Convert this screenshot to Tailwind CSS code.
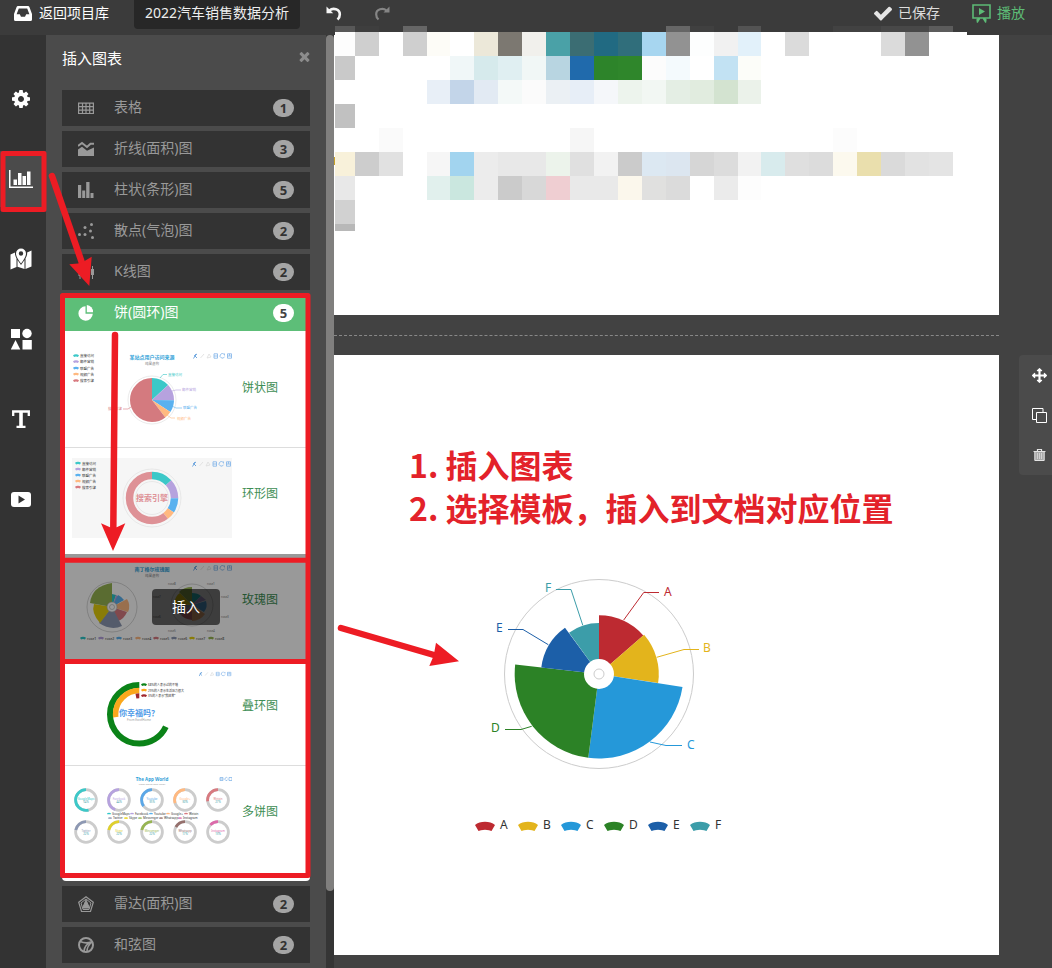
<!DOCTYPE html>
<html lang="zh-CN">
<head>
<meta charset="utf-8">
<meta name="viewport" content="width=device-width, initial-scale=1">
<title>2022汽车销售数据分析</title>
<script src="https://cdn.jsdelivr.net/npm/@tailwindcss/browser@4"></script>
</head>
<body class="bg-[#424242] font-['Noto_Sans','Noto_Sans_CJK_SC',sans-serif] text-sm">
<svg class="hidden" aria-hidden="true">
  <symbol id="toolbox" viewBox="0 0 39 6">
    <g fill="none" stroke="#7fb2e8" stroke-width=".8">
      <path d="M.5 5.500 2 3 3 1M2 3l2 2M1 3l3-2" stroke="#4f93d8"/><path d="M7.500 5l3.500-4" stroke="#ddd"/><path d="M14 5l2-4 2 3-4 1" stroke="#ddd"/>
      <path d="M21 .8h3.500v4.400h-3.500zM21 3h3.500M31 1.200a2.300 2.300 0 1 0 .5 2.500M31.500.5v2M34.500.8h4v4.400h-4zM34.500 3h4M36.500.8v2"/>
    </g>
  </symbol>
  <symbol id="fan" viewBox="-10 -5 20 10"><path d="M-10-1C-5-5.300 5-5.300 10-1L6.500 5 4 4.300Q0 3-4 4.300L-6.500 5Z"/></symbol>
</svg>
<div class="relative flex min-h-screen flex-col overflow-hidden">
  <header class="flex h-[35px] items-start bg-[#3b3b3b] text-white">
    <a href="#" class="flex h-[26px] w-[120px] items-center pl-3.5">
      <svg class="mr-[7px] h-[15px] w-[18px]" viewBox="0 0 18 15" fill="currentColor"><path fill-rule="evenodd" d="M4 0h10q1 0 1.400 1L18 8v5.500q0 1.500-1.500 1.500h-15Q0 15 0 13.500V8L2.600 1Q3 0 4 0zm.8 2.500L2.600 8.200h3.200L7 10.700h4l1.200-2.500h3.200l-2.200-5.700z"/></svg>
      返回项目库
    </a>
    <button class="ml-3.5 h-[29px] rounded-b bg-[#272727] px-[11px] pb-1 text-[#eee]">2022汽车销售数据分析</button>
    <button aria-label="撤销" class="ml-[26px] flex h-[26px] items-center">
      <svg class="h-4 w-4" viewBox="0 0 16 16" fill="none" stroke="#f5f5f5" stroke-width="2.600"><path d="M3.500 5.500C7 2.500 14 4 13.800 9.500q0 3-2.300 5"/><path d="M.5 1.500v6.700H7.200z" fill="#f5f5f5" stroke="none"/></svg>
    </button>
    <button aria-label="重做" class="ml-8 flex h-[26px] items-center">
      <svg class="h-4 w-4" viewBox="0 0 16 16" fill="none" stroke="#858585" stroke-width="2.200"><path d="M12.500 5.500C9 2.500 2 4 2.200 9.500q0 3 2.300 5"/><path d="M15.500 1.500v6H9.500z" fill="#858585" stroke="none"/></svg>
    </button>
    <div class="ml-auto flex h-[26px] items-center text-[#ddd]">
      <svg class="mr-1.5 h-[18px] w-[18px]" viewBox="121 236 1550 1286" fill="#e5e5e5"><path d="M1671 566q0 40-28 68l-724 724-136 136q-28 28-68 28t-68-28l-136-136-362-362q-28-28-28-68t28-68l136-136q28-28 68-28t68 28l294 295 656-657q28-28 68-28t68 28l136 136q28 28 28 68z"/></svg>
      已保存
    </div>
    <button class="mr-[27px] ml-8 flex h-[26px] items-center text-[#5dbb76]">
      <svg class="mr-1.5 h-[19px] w-[19px]" viewBox="0 0 19 19"><path d="M1 1h17v13H1zM7.500 14.500l-2.500 4M11.500 14.500l2.500 4M4.500 16.500l3-2M14.500 16.500l-3-2" fill="none" stroke="currentColor" stroke-width="1.600"/><path d="M7 4l6 3.500L7 11z" fill="currentColor"/></svg>
      播放
    </button>
  </header>

  <div class="flex flex-1">
    <nav class="flex w-[46px] shrink-0 flex-col gap-6 bg-[#333] pt-9 text-white">
      <button aria-label="设置" class="flex h-14 items-center pl-3"><svg class="h-[18px] w-[18px]" viewBox="0 128 1536 1536" fill="currentColor"><path d="M1024 896q0-106-75-181t-181-75-181 75-75 181 75 181 181 75 181-75 75-181zm512-109v222q0 12-8 23t-20 13l-185 28q-19 54-39 91 35 50 107 138 10 12 10 25t-9 23q-27 37-99 108t-94 71q-12 0-26-9l-138-108q-44 23-91 38-16 136-29 186-7 28-36 28h-222q-14 0-24.500-8.500t-11.500-21.500l-28-184q-49-16-90-37l-141 107q-10 9-25 9-14 0-25-11-126-114-165-168-7-10-7-23 0-12 8-23 15-21 51-66.500t54-70.500q-27-50-41-99l-183-27q-13-2-21-12.500t-8-23.500v-222q0-12 8-23t19-13l186-28q14-46 39-92-40-57-107-138-10-12-10-24 0-10 9-23 26-36 98.500-107.500t94.500-71.500q13 0 26 10l138 107q44-23 91-38 16-136 29-186 7-28 36-28h222q14 0 24.500 8.500t11.500 21.500l28 184q49 16 90 37l142-107q9-9 24-9 13 0 25 10 129 119 165 170 7 8 7 22 0 12-8 23-15 21-51 66.500t-54 70.500q26 50 41 98l183 28q13 2 21 12.500t8 23.500z"/></svg></button>
      <button aria-label="图表" class="flex h-14 items-center bg-[#4b4b4b] pl-[9px]"><svg class="h-[18px] w-6" viewBox="0 0 24 18" fill="currentColor"><path d="M0 0h1.500v16.500H24V18H0zM4.500 9.500h3.500V15H4.500zM9 3h3.500v12H9zM13.500 6H17v9h-3.500zM18 1.500h3.500V15H18z"/></svg></button>
      <button aria-label="地图" class="flex h-14 items-center pl-2.5"><svg class="h-[22px] w-[22px]" viewBox="0 0 22 22" fill="currentColor"><path d="M.5 6.500 5 4.500q-.2 3 1.500 6v8.500L.5 21.500zM15.500 10.500q2-3 1.600-6l4.400-2v16l-6 2.500zM7.500 12l3.500 5 3.500-5v9l-7-2.300z"/><path fill-rule="evenodd" d="M11 .5a5 5 0 0 1 5 5q0 3.500-5 10-5-6.500-5-10a5 5 0 0 1 5-5zm0 2.800a2.200 2.200 0 1 0 0 4.400 2.200 2.200 0 0 0 0-4.400z"/></svg></button>
      <button aria-label="形状" class="flex h-14 items-center pl-[11px]"><svg class="h-[22px] w-[21px]" viewBox="0 0 21 22" fill="currentColor"><path d="M0 1h9v9H0zM4.500 12l4.800 9.500H-.3zM11.500 12h9.300v9.500h-9.300z"/><circle cx="16" cy="5.500" r="4.700"/></svg></button>
      <button aria-label="文字" class="flex h-14 items-center pl-3"><svg class="h-[18px] w-[18px]" viewBox="0 0 18 18" fill="none" stroke="currentColor"><path d="M1.200 6V1.500h15.600V6M4.500 16.800h9" stroke-width="2.300"/><path d="M9 1.500v15" stroke-width="3.600"/></svg></button>
      <button aria-label="视频" class="flex h-14 items-center pl-[11px]"><svg class="h-[15px] w-5" viewBox="0 0 20 15"><rect width="20" height="15" rx="3" fill="currentColor"/><path d="M7.500 3.500l6.500 4-6.500 4z" fill="#333"/></svg></button>
    </nav>

    <aside class="w-[280px] shrink-0 bg-[#4b4b4b] px-4">
      <div class="flex h-[55px] items-center justify-between pb-2">
        <h2 class="text-[15px] text-white">插入图表</h2>
        <button aria-label="关闭"><svg class="-mt-1 h-[11px] w-[11px]" viewBox="302 238 1188 1316" fill="#8c8c8c"><path d="M1490 1322q0 40-28 68l-136 136q-28 28-68 28t-68-28l-294-294-294 294q-28 28-68 28t-68-28l-136-136q-28-28-28-68t28-68l294-294-294-294q-28-28-28-68t28-68l136-136q28-28 68-28t68 28l294 294 294-294q28-28 68-28t68 28l136 136q28 28 28 68t-28 68l-294 294 294 294q28 28 28 68z"/></svg></button>
      </div>
      <div class="flex flex-col gap-[5px] text-[#999]">
        <button class="flex h-9 items-center bg-[#333] px-4">
          <svg class="mr-5 h-4 w-4" viewBox="0 0 16 16" fill="none" stroke="currentColor" stroke-width="1.200"><path d="M.6 3.100h14.800v10.400H.6zM0 6.600h16M0 10.100h16M4.500 3v10.500M8 3v10.500M11.700 3v10.500"/></svg>
          <span class="pb-0.5">表格</span><span class="ml-auto h-[18px] w-[21px] rounded-full bg-[#a5a5a5] text-[13px] leading-[18px] font-bold text-[#333]">1</span>
        </button>
        <button class="flex h-9 items-center bg-[#333] px-4">
          <svg class="mr-5 h-4 w-4" viewBox="0 0 16 16" fill="currentColor"><path d="M0 8.500l4-2.700 5 4L16 6.500V15H0z"/><path d="M0 5l4-3 5 4L12.500 2.800H16" fill="none" stroke="currentColor" stroke-width="2"/></svg>
          <span class="pb-0.5">折线(面积)图</span><span class="ml-auto h-[18px] w-[21px] rounded-full bg-[#a5a5a5] text-[13px] leading-[18px] font-bold text-[#333]">3</span>
        </button>
        <button class="flex h-9 items-center bg-[#333] px-4">
          <svg class="mr-5 h-4 w-4" viewBox="0 0 16 16" fill="currentColor"><path d="M0 3h3.200v13H0zM4.200 8.500h3v7.500h-3zM8.200 0h3.300v16H8.200zM12.500 11h3v5h-3z"/></svg>
          <span class="pb-0.5">柱状(条形)图</span><span class="ml-auto h-[18px] w-[21px] rounded-full bg-[#a5a5a5] text-[13px] leading-[18px] font-bold text-[#333]">5</span>
        </button>
        <button class="flex h-9 items-center bg-[#333] px-4">
          <svg class="mr-5 h-4 w-4" viewBox="0 0 16 16" fill="currentColor"><circle cx="1.500" cy="11.500" r="1.500"/><circle cx="7" cy="4.500" r="1.500"/><circle cx="7" cy="11.500" r="1.500"/><circle cx="13.500" cy="1.500" r="1.500"/><circle cx="12.500" cy="8" r="1.500"/><circle cx="14.500" cy="14.500" r="1.500"/></svg>
          <span class="pb-0.5">散点(气泡)图</span><span class="ml-auto h-[18px] w-[21px] rounded-full bg-[#a5a5a5] text-[13px] leading-[18px] font-bold text-[#333]">2</span>
        </button>
        <button class="flex h-9 items-center bg-[#333] px-4">
          <svg class="mr-5 h-4 w-4" viewBox="0 0 16 16" fill="currentColor"><path d="M.5 6h3v6h-3zM1.500 4h1v11h-1zM6.500 3h3v8h-3zM7.500 1h1v13h-1zM13 5h3v6h-3zM14 2h1v13h-1z"/></svg>
          <span class="pb-0.5">K线图</span><span class="ml-auto h-[18px] w-[21px] rounded-full bg-[#a5a5a5] text-[13px] leading-[18px] font-bold text-[#333]">2</span>
        </button>
        <section>
          <button class="flex h-9 w-full items-center bg-[#5dbe78] px-4 text-white">
            <svg class="mr-5 h-4 w-4" viewBox="0 0 16 16" fill="currentColor"><path d="M7.500 1.300v7.500h7.300A7.200 7.200 0 1 1 7.500 1.300z"/><path d="M8.800 0a6.800 6.800 0 0 1 6.200 7.200H8.800z"/></svg>
            <span class="pb-0.5">饼(圆环)图</span><span class="ml-auto h-[18px] w-[21px] rounded-full bg-white text-[13px] leading-[18px] font-bold text-[#444]">5</span>
          </button>
          <ul class="rounded-b bg-white pt-[11px] pb-[9px] text-xs text-[#3e8e54]">
            <li class="flex h-[106px] items-start border-b border-[#ddd] px-2.5 pt-2.5">
              <svg class="h-20 w-40" viewBox="72 352 160 80">
                <use href="#toolbox" x="193" y="353" width="39" height="6"/>
                <g fill="#3cc8c8"><use href="#fan" x="73" y="353.500" width="6" height="4"/></g><g fill="#b6a2de"><use href="#fan" x="73" y="359.500" width="6" height="4"/></g><g fill="#5ab1ef"><use href="#fan" x="73" y="366" width="6" height="4"/></g><g fill="#ffb980"><use href="#fan" x="73" y="372" width="6" height="4"/></g><g fill="#d87a80"><use href="#fan" x="73" y="378.500" width="6" height="4"/></g>
                <g font-size="3.500" fill="#333"><text x="80" y="357">直接访问</text><text x="80" y="363">邮件营销</text><text x="80" y="369.500">联盟广告</text><text x="80" y="375.500">视频广告</text><text x="80" y="382">搜索引擎</text></g>
                <text x="152" y="359" font-size="5" text-anchor="middle" fill="#2f9fd8" font-weight="bold">某站点用户访问来源</text><text x="152" y="365" font-size="3.500" text-anchor="middle" fill="#888">纯属虚构</text>
                <g fill="none" transform="translate(152 400) rotate(-90)"><circle r="24" stroke="#ddd" stroke-width=".6"/>
                  <g stroke-width="22"><circle r="11" pathLength="100" stroke="#3cc8c8" stroke-dasharray="13.100 100"/><circle r="11" pathLength="100" stroke="#b6a2de" stroke-dasharray="12.100 100" stroke-dashoffset="-13.100"/><circle r="11" pathLength="100" stroke="#5ab1ef" stroke-dasharray="9.100 100" stroke-dashoffset="-25.200"/><circle r="11" pathLength="100" stroke="#ffb980" stroke-dasharray="5.300 100" stroke-dashoffset="-34.300"/><circle r="11" pathLength="100" stroke="#d47a7f" stroke-dasharray="60.400 100" stroke-dashoffset="-39.600"/></g></g>
                <g font-size="3.500"><text x="168" y="376" fill="#3cc8c8">直接访问</text><text x="182" y="391" fill="#b6a2de">邮件营销</text><text x="183" y="409" fill="#5ab1ef">联盟广告</text><text x="177" y="420" fill="#ffb980">视频广告</text><text x="108" y="410" fill="#d87a80">搜索引擎</text></g>
                <g fill="none" stroke-width=".6"><path d="M160 378l3-3.500h4" stroke="#3cc8c8"/><path d="M172 391l4-1h5" stroke="#b6a2de"/><path d="M172 406l4 2h6" stroke="#5ab1ef"/><path d="M167 415l4 3h4" stroke="#ffb980"/><path d="M131 407l-3 2h-5" stroke="#d87a80"/></g>
              </svg><span class="ml-2.5 pt-7">饼状图</span>
            </li>
            <li class="flex h-[106px] items-start px-2.5 pt-2.5">
              <svg class="h-20 w-40 bg-[#f6f6f6]" viewBox="72 458 160 80">
                <use href="#toolbox" x="192" y="461" width="39" height="6"/>
                <g fill="#3cc8c8"><use href="#fan" x="75" y="461" width="6" height="4"/></g><g fill="#b6a2de"><use href="#fan" x="75" y="467" width="6" height="4"/></g><g fill="#5ab1ef"><use href="#fan" x="75" y="473" width="6" height="4"/></g><g fill="#ffb980"><use href="#fan" x="75" y="479" width="6" height="4"/></g><g fill="#d87a80"><use href="#fan" x="75" y="485" width="6" height="4"/></g>
                <g font-size="3.500" fill="#333"><text x="82" y="464.500">直接访问</text><text x="82" y="470.500">邮件营销</text><text x="82" y="476.500">联盟广告</text><text x="82" y="482.500">视频广告</text><text x="82" y="488.500">搜索引擎</text></g>
                <g fill="none" transform="translate(152 498) rotate(-90)"><circle r="29" stroke="#ddd" stroke-width=".6"/><circle r="16.500" stroke="#ddd" stroke-width=".6"/>
                  <g stroke-width="7.500"><circle r="22.500" pathLength="100" stroke="#3cc8c8" stroke-dasharray="13.100 100"/><circle r="22.500" pathLength="100" stroke="#b6a2de" stroke-dasharray="12.100 100" stroke-dashoffset="-13.100"/><circle r="22.500" pathLength="100" stroke="#5ab1ef" stroke-dasharray="9.100 100" stroke-dashoffset="-25.200"/><circle r="22.500" pathLength="100" stroke="#ffb980" stroke-dasharray="5.300 100" stroke-dashoffset="-34.300"/><circle r="22.500" pathLength="100" stroke="#de9196" stroke-dasharray="60.400 100" stroke-dashoffset="-39.600"/></g></g>
                <text x="152" y="501" font-size="8" font-weight="bold" text-anchor="middle" fill="#de9196">搜索引擎</text>
              </svg><span class="ml-2.5 pt-7">环形图</span>
            </li>
            <li class="relative flex h-[106px] items-start px-2.5 pt-2.5">
              <svg class="h-20 w-40" viewBox="72 564 160 80">
                <use href="#toolbox" x="193" y="565" width="39" height="6"/>
                <text x="152" y="571" font-size="5" text-anchor="middle" fill="#2f9fd8" font-weight="bold">南丁格尔玫瑰图</text><text x="152" y="577" font-size="3.500" text-anchor="middle" fill="#888">纯属虚构</text>
                <g id="rose" transform="translate(112 607)"><circle r="25" fill="none" stroke="#bbb" stroke-width=".6"/>
                  <path d="M0 0V-13L4-12z" fill="#2ec7c9"/><path d="M0 0L4-12 7-10z" fill="#b6a2de"/><path d="M0 0L6-12Q10-10 12-7z" fill="#5ab1ef"/><path d="M0 0L15-8Q19-2 16 5z" fill="#ffb980"/><path d="M0 0L15 5Q12 12 6 14z" fill="#d87a80"/><path d="M0 0L10 19Q-1 24-13 16z" fill="#8d98b3"/><path d="M0 0L-12 16Q-21 6-18-3z" fill="#e5cf0d"/><path d="M0 0L-22-4Q-20-21 0-24z" fill="#97b552"/><circle r="5" fill="#fff" stroke="#aaa" stroke-width=".6"/><circle r="2.500" fill="none" stroke="#aaa" stroke-width=".6"/></g>
                <g transform="translate(192 605)"><circle r="21" fill="none" stroke="#bbb" stroke-width=".6"/><path d="M0 0V-12Q6-12 9-9z" fill="#2ec7c9"/><path d="M0 0L9-9 14-5z" fill="#b6a2de"/><path d="M0 0L14-4Q16 2 12 7z" fill="#5ab1ef"/><path d="M0 0L13 9Q8 16 0 16z" fill="#ffb980"/><path d="M0 0V15Q-8 14-11 10z" fill="#d87a80"/><path d="M0 0L-11 10Q-16 5-17-1z" fill="#8d98b3"/><path d="M0 0L-18-1Q-17-9-12-12z" fill="#e5cf0d"/><path d="M0 0L-13-13Q-8-18 0-18z" fill="#97b552"/></g>
                <g font-size="3" fill="#777"><text x="168" y="584.500">rose8</text><text x="207" y="584.500">rose1</text><text x="153" y="598">rose7</text><text x="221" y="598">rose2</text><text x="153" y="618">rose6</text><text x="221" y="618">rose3</text><text x="168" y="632">rose5</text><text x="207" y="632">rose4</text></g>
                <g fill="#2ec7c9"><use href="#fan" x="80" y="636" width="6" height="4"/></g><g fill="#b6a2de"><use href="#fan" x="98" y="636" width="6" height="4"/></g><g fill="#5ab1ef"><use href="#fan" x="116" y="636" width="6" height="4"/></g><g fill="#ffb980"><use href="#fan" x="135" y="636" width="6" height="4"/></g><g fill="#d87a80"><use href="#fan" x="153" y="636" width="6" height="4"/></g><g fill="#8d98b3"><use href="#fan" x="171" y="636" width="6" height="4"/></g><g fill="#e5cf0d"><use href="#fan" x="189" y="636" width="6" height="4"/></g><g fill="#97b552"><use href="#fan" x="208" y="636" width="6" height="4"/></g>
                <g font-size="3.500" fill="#333"><text x="87" y="640">rose1</text><text x="105" y="640">rose2</text><text x="123" y="640">rose3</text><text x="142" y="640">rose4</text><text x="160" y="640">rose5</text><text x="178" y="640">rose6</text><text x="196" y="640">rose7</text><text x="215" y="640">rose8</text></g>
              </svg><span class="ml-2.5 pt-7">玫瑰图</span>
              <div class="absolute inset-0 bg-black/40"></div>
              <button class="absolute top-[35px] left-[90px] h-9 w-[68px] rounded-sm bg-black/60 text-sm text-white">插入</button>
            </li>
            <li class="flex h-[106px] items-start border-b border-[#ddd] px-2.5 pt-2.5">
              <svg class="h-20 w-40" viewBox="72 670 160 80">
                <use href="#toolbox" x="198" y="671.500" width="34" height="5"/>
                <g fill="none" transform="translate(139.300 714.300) scale(-1 1) rotate(-90)"><circle r="29.300" pathLength="100" stroke="#0b8318" stroke-width="6" stroke-dasharray="68 100"/><circle r="23.700" pathLength="100" stroke="#fba81c" stroke-width="5.500" stroke-dasharray="27 100"/><circle r="18.500" pathLength="100" stroke="#a0282e" stroke-width="5" stroke-dasharray="3 100"/></g>
                <g fill="#0b8318"><use href="#fan" x="141" y="682.500" width="6" height="4"/></g><g fill="#fba81c"><use href="#fan" x="141" y="688" width="6" height="4"/></g><g fill="#a0282e"><use href="#fan" x="141" y="693.500" width="6" height="4"/></g>
                <g font-size="3" fill="#333"><text x="148" y="686">68%的人表示过的不错</text><text x="148" y="691.500">29%的人表示生活压力很大</text><text x="148" y="697">3%的人表示“我姓曾”</text></g>
                <text x="139" y="715.500" font-size="8" font-weight="bold" text-anchor="middle" fill="#4f9be8">你幸福吗？</text><text x="139" y="721" font-size="3" text-anchor="middle" fill="#999">From ExcelHome</text>
              </svg><span class="ml-2.5 pt-7">叠环图</span>
            </li>
            <li class="flex h-[106px] items-start px-2.5 pt-2.5">
              <svg id="apps" class="h-20 w-40" viewBox="72 776 160 80">
                <text x="152" y="781" font-size="4.500" text-anchor="middle" fill="#2f9fd8" font-weight="bold">The App World</text><text x="152" y="785" font-size="2.500" text-anchor="middle" fill="#999">From global web index</text>
                <path d="M220 777.500h3v3h-3zM220 779h3M227.500 778a1.500 1.500 0 1 0 .3 1.500M229 777.500h3v3h-3z" fill="none" stroke="#7ab0e6" stroke-width=".7"/>
                <g fill="#2ec7c9"><use href="#fan" x="107" y="812" width="4" height="3"/></g><g fill="#b6a2de"><use href="#fan" x="130" y="812" width="4" height="3"/></g><g fill="#5ab1ef"><use href="#fan" x="149" y="812" width="4" height="3"/></g><g fill="#ffb980"><use href="#fan" x="166" y="812" width="4" height="3"/></g><g fill="#d87a80"><use href="#fan" x="184" y="812" width="4" height="3"/></g>
                <g fill="#8d98b3"><use href="#fan" x="108" y="816.500" width="4" height="3"/></g><g fill="#e5cf0d"><use href="#fan" x="124" y="816.500" width="4" height="3"/></g><g fill="#97b552"><use href="#fan" x="138" y="816.500" width="4" height="3"/></g><g fill="#95706d"><use href="#fan" x="159" y="816.500" width="4" height="3"/></g><g fill="#dc69aa"><use href="#fan" x="178" y="816.500" width="4" height="3"/></g>
                <g font-size="3" fill="#333"><text x="112" y="814.800">GoogleMaps</text><text x="135" y="814.800">Facebook</text><text x="154" y="814.800">Youtube</text><text x="171" y="814.800">Google+</text><text x="189" y="814.800">Weixin</text><text x="113" y="819.300">Twitter</text><text x="129" y="819.300">Skype</text><text x="143" y="819.300">Messenger</text><text x="164" y="819.300">Whatsapp</text><text x="183" y="819.300">Instagram</text></g>
              </svg><span class="ml-2.5 pt-7">多饼图</span>
            </li>
          </ul>
        </section>
        <button class="flex h-9 items-center bg-[#333] px-4">
          <svg class="mr-5 h-[17px] w-4" viewBox="0 0 16 17" fill="none" stroke="currentColor"><path d="M8 .8l7.300 5.400-2.800 9.300h-9L.7 6.200z" stroke-width="1.200"/><path d="M8 3l5 4-2 6.500H5L3 7z"/><path d="M8 4l3.500 8h-7z" fill="currentColor"/></svg>
          <span class="pb-0.5">雷达(面积)图</span><span class="ml-auto h-[18px] w-[21px] rounded-full bg-[#a5a5a5] text-[13px] leading-[18px] font-bold text-[#333]">2</span>
        </button>
        <button class="flex h-9 items-center bg-[#333] px-4">
          <svg class="mr-5 h-4 w-4" viewBox="0 0 16 16" fill="none" stroke="currentColor"><circle cx="8" cy="8" r="7" stroke-width="2"/><path d="M2 4.500q6 2.500 11 .5Q6.500 8 6 14M14 5q-5 4-5 9.500" stroke-width="1.600"/></svg>
          <span class="pb-0.5">和弦图</span><span class="ml-auto h-[18px] w-[21px] rounded-full bg-[#a5a5a5] text-[13px] leading-[18px] font-bold text-[#333]">2</span>
        </button>
      </div>
    </aside>
    <div class="w-2 shrink-0 bg-[#353535]"><div class="h-[856px] rounded-full bg-[#807f7e]"></div></div>

    <main class="flex flex-1 items-start gap-5">
      <div class="flex-1">
        <section class="h-[280px] bg-white"></section>
        <div class="flex h-10 items-center"><div class="w-full border-t border-dashed border-[#888]"></div></div>
        <section class="h-[600px] bg-white pt-[88px]">
          <div class="pl-[75px] font-['Noto_Sans_CJK_SC',sans-serif] text-[32px] leading-[43px] font-bold whitespace-nowrap text-[#e3222a]">
            <p>1. 插入图表</p>
            <p>2. 选择模板，插入到文档对应位置</p>
          </div>
          <svg class="mt-10 ml-[140px] h-[270px] w-[260px]" viewBox="474 569 260 270" font-size="12" role="img" aria-label="玫瑰图">
            <circle cx="599" cy="674" r="94.500" fill="none" stroke="#ccc"/>
            <path d="M599 674V615.300A58.700 58.700 0 0 1 643.300 635.500z" fill="#bd2a31"/>
            <path d="M599 674L644.100 634.800A59.800 59.800 0 0 1 658.100 683.100z" fill="#e3b41c"/>
            <path d="M599 674L682.500 686.900A84.500 84.500 0 0 1 588.300 757.800z" fill="#2598d9"/>
            <path d="M599 674L588.300 757.800A84.500 84.500 0 0 1 515.200 664.600z" fill="#2c8226"/>
            <path d="M599 674L541.300 667.600A57.500 57.500 0 0 1 565 627.700z" fill="#1c5fa8"/>
            <path d="M599 674L569 632.700A51 51 0 0 1 599 623z" fill="#3c9da9"/>
            <circle cx="599" cy="674" r="15" fill="#fff"/><circle cx="599" cy="674" r="5" fill="none" stroke="#ccc"/>
            <g fill="none"><path d="M623.700 620L643.700 592.500H659" stroke="#bd2a31"/><path d="M656.700 657.300L684 649.500H699" stroke="#e3b41c"/><path d="M650 742L666 745.500H682" stroke="#2598d9"/><path d="M531.700 726.300L521 729.500H505" stroke="#2c8226"/><path d="M548.300 644.700L523 629.500H508" stroke="#1c5fa8"/><path d="M582.700 625L571 589.500H556" stroke="#3c9da9"/></g>
            <text x="664" y="596" fill="#bd2a31">A</text><text x="703" y="652" fill="#e3b41c">B</text><text x="687" y="749" fill="#2598d9">C</text><text x="491" y="732" fill="#2c8226">D</text><text x="496" y="632" fill="#1c5fa8">E</text><text x="545" y="592" fill="#3c9da9">F</text>
            <g fill="#bd2a31"><use href="#fan" x="475" y="821" width="20" height="10"/></g><g fill="#e3b41c"><use href="#fan" x="518" y="821" width="20" height="10"/></g><g fill="#2598d9"><use href="#fan" x="561" y="821" width="20" height="10"/></g><g fill="#2c8226"><use href="#fan" x="604" y="821" width="20" height="10"/></g><g fill="#1c5fa8"><use href="#fan" x="648" y="821" width="20" height="10"/></g><g fill="#3c9da9"><use href="#fan" x="690" y="821" width="20" height="10"/></g>
            <g fill="#333"><text x="500" y="829">A</text><text x="543" y="829">B</text><text x="586" y="829">C</text><text x="629" y="829">D</text><text x="673" y="829">E</text><text x="715" y="829">F</text></g>
          </svg>
        </section>
      </div>
      <div class="mt-80 flex w-[33px] flex-col rounded-l bg-[#4b4b4b] pl-[13px] text-white">
        <button aria-label="移动" class="flex h-10 items-center"><svg class="h-[15px] w-[15px]" viewBox="0 0 1792 1792" fill="currentColor"><path d="M1792 896q0 26-19 45l-256 256q-19 19-45 19t-45-19-19-45v-128h-384v384h128q26 0 45 19t19 45-19 45l-256 256q-19 19-45 19t-45-19l-256-256q-19-19-19-45t19-45 45-19h128v-384h-384v128q0 26-19 45t-45 19-45-19l-256-256q-19-19-19-45t19-45l256-256q19-19 45-19t45 19 19 45v128h384v-384h-128q-26 0-45-19t-19-45 19-45l256-256q19-19 45-19t45 19l256 256q19 19 19 45t-19 45-45 19h-128v384h384v-128q0-26 19-45t45-19 45 19l256 256q19 19 19 45z"/></svg></button>
        <button aria-label="复制" class="flex h-10 items-center"><svg class="h-[15px] w-[15px]" viewBox="0 0 15 15" fill="none" stroke="currentColor"><path d="M4.500 4.500h10v10h-10zM4 11.500H.5V.5h10.500V4"/></svg></button>
        <button aria-label="删除" class="flex h-10 items-center pl-px"><svg class="h-3 w-[13px]" viewBox="0 0 13 12" fill="none" stroke="#e4e4e4"><path d="M.5 2.500h12M4.500 2V.5h4V2" stroke-width="1.200"/><path d="M1.800 3v8.500h9.400V3" fill="#aaa"/><path d="M4.500 4v6M6.500 4v6M8.500 4v6" stroke-width=".7"/></svg></button>
      </div>
    </main>
  </div>

  <svg id="mosaic" class="pointer-events-none absolute top-0 left-0" width="1052" height="320" viewBox="0 0 1052 320" shape-rendering="crispEdges"><rect x="335" y="32" width="632" height="4" fill="#fff"/><rect x="334" y="157" width="1" height="8" fill="#c9a227"/></svg>
  <svg class="pointer-events-none absolute top-0 left-0" width="1052" height="968" viewBox="0 0 1052 968" fill="none" stroke="#ed1c24" stroke-width="5" stroke-linejoin="round">
    <rect x="3" y="153.500" width="41" height="56"/>
    <rect x="62.500" y="295.500" width="245.500" height="580"/>
    <path d="M62.500 560.300H308M62.500 661.500H308"/>
    <g stroke-linecap="round" stroke-width="6.500"><path d="M52 176L82 263M115 335L113.300 529M341 628L434 655"/></g>
    <g fill="#ed1c24" stroke="none"><path d="M89.300 286L69.300 264.300 78 263.500 85 260.700 91.700 256.700z"/><path d="M113 551L101 523.300 110 527.300H116.700L125.300 523.300z"/><path d="M459 661.300L436 642.700 434.300 652.300 432.700 658 429.300 666z"/></g>
  </svg>
</div>
<script>
const NS = 'http://www.w3.org/2000/svg';
function add(parent, tag, attrs, text) {
  const el = document.createElementNS(NS, tag);
  for (const k in attrs) el.setAttribute(k, attrs[k]);
  if (text) el.textContent = text;
  parent.appendChild(el);
  return el;
}
// Pixelated preview: column edges, then rows of [top, height, {column: colour}]
const edges = [335,355,379,403,427,450,474,498,522,546,570,594,618,642,666,690,714,738,761,785,809,833,857,881,905,929,953];
const rows = [
  [26,6,{0:'#585858',1:'#3e3e3e',3:'#666',14:'#666',15:'#404040',17:'#535353',21:'#424242',22:'#424242',23:'#484848',24:'#484848',25:'#5c5c5c'}],
  [32,24,{0:'#fdfdfd',1:'#cfcfcf',3:'#cfcfcf',4:'#fdfcf7',6:'#ece8d9',7:'#7c7871',8:'#f1f0ec',9:'#4aa1a7',10:'#3b6d73',11:'#216a82',12:'#306e7b',13:'#a7d6f0',14:'#929292',15:'#fdfefe',16:'#f1f1f1',17:'#e2f1fa',19:'#dbdbdb',23:'#dbdbdb',24:'#929292'}],
  [56,24,{0:'#c9c9c9',5:'#f0f7f8',6:'#d6eaec',7:'#e0eff2',8:'#f1f7f6',9:'#b8d5e1',10:'#206aac',11:'#2d842a',12:'#2f862b',13:'#fcfcfc',14:'#f4fafd',16:'#c2e2f3',17:'#fcfdf9'}],
  [80,24,{4:'#e8eff7',5:'#c3d5e9',6:'#e2eaf3',7:'#f4f9f8',8:'#fbfbfb',9:'#ebf0f4',10:'#e7eef7',11:'#f5f7fa',12:'#edf4ed',13:'#f2f7f3',14:'#e4eee4',15:'#e1ecdf',16:'#d3e3d0',17:'#ebf2ea'}],
  [104,24,{0:'#c1c1c1'}],
  [128,24,{2:'#fafafa',10:'#f6f6f6',21:'#fcfcfc'}],
  [152,24,{0:'#f8f1da',1:'#cdcdcd',2:'#e1e1e1',4:'#f6f6f6',5:'#a2d4ef',6:'#ececec',7:'#e8e8e8',8:'#e8e8e8',9:'#ecf3eb',10:'#e0e0e0',11:'#f2f2f2',12:'#cbcbcb',13:'#dce8f2',14:'#dce6f0',15:'#d6d6d6',16:'#dcdcdc',17:'#f2f2f2',18:'#d8ebed',19:'#dfdfdf',20:'#dcdcdc',21:'#fcf9ee',22:'#eadfad',23:'#dadada',24:'#e2e2e2',25:'#e4e4e4'}],
  [176,24,{0:'#e8e8e8',4:'#e1f0ed',5:'#cae7df',6:'#ececec',7:'#cbcbcb',8:'#d8d8d8',9:'#efced2',10:'#e9e9e9',11:'#e9e9e9',12:'#fbf7ec',13:'#e0e0df',14:'#dbdbdb',16:'#ebebeb',17:'#fdfdfd'}],
  [200,24,{0:'#d1d1d1'}],
  [224,7,{0:'#b8b8b8'}]
];
const mosaic = document.getElementById('mosaic');
for (const [y, height, cells] of rows)
  for (const c in cells) add(mosaic, 'rect', {x: edges[c], y, width: edges[+c + 1] - edges[c], height, fill: cells[c]});

// Ten small share rings
const apps = [['GoogleMaps',54,'#3cc8c8'],['Facebook',44,'#b6a2de'],['Youtube',35,'#5aa7e8'],['Google+',30,'#ffb980'],['Weixin',27,'#d87a80'],['Twitter',22,'#8d98b3'],['Skype',22,'#e0d02a'],['Messenger',22,'#97b552'],['Whatsapp',17,'#95706d'],['Instagram',13,'#dc69aa']];
apps.forEach(([name, share, color], i) => {
  const g = add(document.getElementById('apps'), 'g', {transform: `translate(${86 + 33 * (i % 5)} ${i < 5 ? 800 : 832})`});
  const ring = {r: 10.4, fill: 'none', 'stroke-width': 2.8};
  add(g, 'circle', {...ring, stroke: '#ccc'});
  add(g, 'circle', {...ring, stroke: color, pathLength: 100, 'stroke-dasharray': share + ' 100', transform: 'scale(-1 1) rotate(-90)'});
  add(g, 'text', {y: -0.5, 'font-size': 2.8, 'text-anchor': 'middle', fill: color}, name);
  add(g, 'text', {y: 3, 'font-size': 2.8, 'text-anchor': 'middle', fill: '#3aa0a8'}, share + '%');
});
</script>
</body>
</html>
